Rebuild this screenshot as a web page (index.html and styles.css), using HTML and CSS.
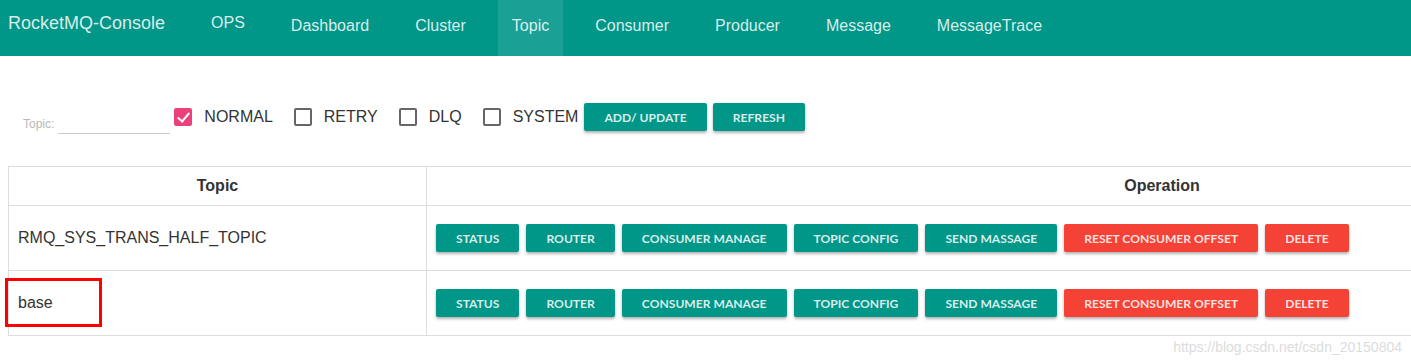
FILE: index.html
```html
<!DOCTYPE html>
<html lang="en">
<head>
  <meta charset="UTF-8" />
  <title>RocketMQ-Console</title>
  <link rel="stylesheet" href="styles.css">
</head>
<body>
  <!-- top bar -->
  <nav class="navbar">
    <a class="brand" href="#">RocketMQ-Console</a>
    <a class="nav-item ops" href="#">OPS</a>
    <a class="nav-item" href="#">Dashboard</a>
    <a class="nav-item" href="#">Cluster</a>
    <a class="nav-item active" href="#">Topic</a>
    <a class="nav-item" href="#">Consumer</a>
    <a class="nav-item" href="#">Producer</a>
    <a class="nav-item" href="#">Message</a>
    <a class="nav-item" href="#">MessageTrace</a>
  </nav>

  <!-- filters -->
  <div class="filter">
    <label class="topic-field">
      <span class="topic-label">Topic:</span>
      <input type="text" class="topic-input">
    </label>
    <label class="check"><span class="box checked"></span>NORMAL</label>
    <label class="check"><span class="box"></span>RETRY</label>
    <label class="check"><span class="box"></span>DLQ</label>
    <label class="check last"><span class="box"></span>SYSTEM</label>
    <button class="btn">ADD/ UPDATE</button>
    <button class="btn">REFRESH</button>
  </div>

  <!-- topic list -->
  <div class="table-wrap">
    <table class="topic-table">
      <thead>
        <tr>
          <th class="col-topic">Topic</th>
          <th>Operation</th>
        </tr>
      </thead>
      <tbody>
        <tr>
          <td>RMQ_SYS_TRANS_HALF_TOPIC</td>
          <td class="ops-cell">
            <button class="btn">STATUS</button>
            <button class="btn">ROUTER</button>
            <button class="btn">CONSUMER MANAGE</button>
            <button class="btn">TOPIC CONFIG</button>
            <button class="btn">SEND MASSAGE</button>
            <button class="btn btn-red">RESET CONSUMER OFFSET</button>
            <button class="btn btn-red">DELETE</button>
          </td>
        </tr>
        <tr>
          <td class="marked">base<span class="mark"></span></td>
          <td class="ops-cell">
            <button class="btn">STATUS</button>
            <button class="btn">ROUTER</button>
            <button class="btn">CONSUMER MANAGE</button>
            <button class="btn">TOPIC CONFIG</button>
            <button class="btn">SEND MASSAGE</button>
            <button class="btn btn-red">RESET CONSUMER OFFSET</button>
            <button class="btn btn-red">DELETE</button>
          </td>
        </tr>
      </tbody>
    </table>
  </div>

  <div class="watermark">https://blog.csdn.net/csdn_20150804</div>
</body>
</html>
```

FILE: styles.css
```css
body {
  margin: 0;
  font-family: 'Liberation Sans', Arial, sans-serif;
  color: #333;
  background: #fff;
  overflow-x: hidden;
}

.navbar {
  display: flex;
  align-items: stretch;
  height: 56px;
  background: #009688;
  padding-left: 8px;
}

.navbar a {
  text-decoration: none;
  color: rgba(255, 255, 255, 0.85);
}

.brand {
  font-size: 18px;
  line-height: 46px;
  margin-right: 32px;
}

.nav-item {
  font-size: 16px;
  line-height: 52px;
  padding: 0 14px;
  margin-right: 18px;
}

.nav-item.ops {
  line-height: 46px;
}

.nav-item.active {
  background: rgba(255, 255, 255, 0.1);
}

.filter {
  display: flex;
  align-items: center;
  height: 28px;
  margin-top: 47px;
  padding-left: 23px;
}

.topic-field {
  display: flex;
  align-items: flex-end;
  align-self: flex-end;
  margin-bottom: -3px;
  margin-right: 4px;
}

.topic-label {
  font-size: 12px;
  color: #b8b8b8;
  padding-bottom: 3px;
}

.topic-input {
  width: 112px;
  height: 20px;
  border: none;
  border-bottom: 1px solid #ccc;
  outline: none;
  padding: 0;
  margin-left: 4px;
}

.check {
  display: flex;
  align-items: center;
  font-size: 16px;
  color: #333;
  margin-right: 21px;
}

.check.last {
  margin-right: 6px;
}

.box {
  width: 18px;
  height: 18px;
  box-sizing: border-box;
  border: 2px solid #666;
  border-radius: 2px;
  margin-right: 12px;
  position: relative;
}

.box.checked {
  background: #ec407a;
  border-color: #ec407a;
}

.box.checked::after {
  content: "";
  position: absolute;
  left: 4px;
  top: 0;
  width: 5px;
  height: 10px;
  border-right: 2px solid #fff;
  border-bottom: 2px solid #fff;
  transform: rotate(40deg);
}

.btn {
  font-family: 'Lato', 'Liberation Sans', sans-serif;
  font-weight: 700;
  font-size: 12.1px;
  height: 28px;
  padding: 0 20px;
  border: none;
  border-radius: 2px;
  background: #009688;
  color: rgba(255, 255, 255, 0.85);
  box-shadow: 0 2px 3px rgba(0, 0, 0, 0.3);
  margin-right: 6px;
  cursor: pointer;
}

.btn-red {
  background: #f44336;
}

.table-wrap {
  overflow: hidden;
  margin-top: 35px;
  padding-left: 8px;
}

.topic-table {
  width: 1890px;
  border-collapse: collapse;
  font-size: 16px;
}

.topic-table th,
.topic-table td {
  border: 1px solid #ddd;
}

.topic-table th {
  height: 36px;
  font-weight: 700;
  text-align: center;
}

.col-topic {
  width: 415px;
}

.topic-table td {
  height: 64px;
  padding: 0 9px;
}

.topic-table td.ops-cell {
  padding-left: 9px;
  font-size: 0;
}

.ops-cell .btn {
  margin-right: 7px;
}

.marked {
  position: relative;
}

.mark {
  position: absolute;
  left: -4px;
  top: 7px;
  width: 97px;
  height: 49px;
  box-sizing: border-box;
  border: 3px solid #f00;
}

.watermark {
  text-align: right;
  font-size: 14px;
  color: #dcdcdc;
  padding: 3px 9px 0 0;
}
```
